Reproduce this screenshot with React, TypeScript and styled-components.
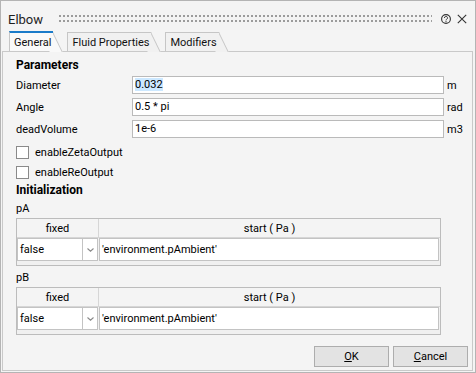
import React from 'react';
import styled, { createGlobalStyle } from 'styled-components';

const GlobalStyle = createGlobalStyle`
  html, body {
    margin: 0;
    padding: 0;
    background: #f4f4f4;
  }
  body {
    font-family: Roboto, 'Liberation Sans', sans-serif;
    font-size: 11px;
    color: #000;
  }
  * {
    box-sizing: border-box;
  }
`;

const Window = styled.div`
  width: 476px;
  height: 373px;
  border: 1px solid #b4b4b4;
  background: #f4f4f4;
  display: flex;
  flex-direction: column;
`;

const TitleBar = styled.div`
  height: 30px;
  display: flex;
  align-items: flex-start;
  padding: 0 8px 0 7px;
`;

const Title = styled.div`
  margin-top: 11px;
  font-size: 13px;
  line-height: 16px;
  color: #1e1e1e;
`;

const Grip = styled.svg`
  flex: 1;
  height: 7px;
  margin: 14px 9px 0 16px;
`;

const TitleIcon = styled.svg`
  width: 10px;
  height: 10px;
  margin-top: 13px;
  & + & {
    margin-left: 6px;
  }
`;

const TabBar = styled.div`
  position: relative;
  z-index: 0;
  height: 20px;
  display: flex;
  align-items: flex-end;
  padding-left: 8px;
`;

const Tab = styled.div<{ $active?: boolean }>`
  position: relative;
  height: ${(p) => (p.$active ? 20 : 19)}px;
  margin-right: 14px;
  padding: 0 2px 0 4px;
  display: flex;
  align-items: center;
  border-left: 1px solid #c6c6c6;
  border-top: ${(p) => (p.$active ? '2px solid #1a7bc9' : '1px solid #c6c6c6')};
  background: ${(p) => (p.$active ? '#f9f9f9' : '#f1f1f1')};
  color: #111;

  &::after {
    content: '';
    position: absolute;
    z-index: -1;
    top: ${(p) => (p.$active ? -1 : -1)}px;
    right: 0;
    width: 12px;
    height: calc(100% + 1px);
    border-top: 1px solid #c6c6c6;
    border-right: 1px solid #c6c6c6;
    background: inherit;
    transform: skewX(26deg);
    transform-origin: top left;
  }
`;

const Pane = styled.div`
  flex: 1;
  margin: 0 2px 1px 1px;
  border: 1px solid #c9c9c9;
  padding: 5px 4px 3px 13px;
  display: flex;
  flex-direction: column;
`;

const Heading = styled.div<{ $gap?: number }>`
  margin-top: ${(p) => p.$gap ?? 0}px;
  font-size: 12px;
  font-weight: 700;
  line-height: 16px;
`;

const ParamGrid = styled.div`
  margin-top: 3px;
  display: grid;
  grid-template-columns: 113px 312px auto;
  grid-auto-rows: 18px;
  column-gap: 3px;
  row-gap: 4px;
  align-items: center;
`;

const FieldBox = styled.div`
  height: 18px;
  border: 1px solid #bababa;
  background: #fff;
  padding: 0 2px;
  line-height: 16px;
  white-space: nowrap;
`;

const Selected = styled.span`
  background: #cce8ff;
`;

const CheckList = styled.div`
  margin-top: 8px;
  display: flex;
  flex-direction: column;
  gap: 7px;
`;

const CheckRow = styled.label`
  height: 13px;
  display: flex;
  align-items: center;
  gap: 6px;
`;

const CheckBox = styled.span`
  width: 13px;
  height: 13px;
  border: 1px solid #8a8a8a;
  background: #fff;
`;

const GroupLabel = styled.div<{ $gap: number }>`
  margin-top: ${(p) => p.$gap}px;
  margin-bottom: 2px;
  line-height: 14px;
`;

const Table = styled.div`
  width: 425px;
  border: 1px solid #bcbcbc;
  background: #f0f0f0;
  padding-bottom: 4px;
`;

const HeaderRow = styled.div`
  display: grid;
  grid-template-columns: 82px 1fr;
  height: 19px;
  border-bottom: 1px solid #d6d6d6;
  background: #f4f4f4;
`;

const HeaderCell = styled.div<{ $divider?: boolean }>`
  display: flex;
  align-items: center;
  justify-content: center;
  border-right: ${(p) => (p.$divider ? '1px solid #d6d6d6' : 'none')};
`;

const DataRow = styled.div`
  display: grid;
  grid-template-columns: 66px 15px 1fr;
  height: 23px;
`;

const Cell = styled.div<{ $joined?: boolean }>`
  border: 1px solid #c3c3c3;
  border-left-width: ${(p) => (p.$joined ? 0 : 1)}px;
  background: #fff;
  padding-left: 2px;
  display: flex;
  align-items: center;
`;

const ValueCell = styled(Cell)`
  margin: 0 1px 0 1px;
`;

const ArrowCell = styled(Cell)`
  justify-content: center;
  padding-left: 0;
`;

const ButtonRow = styled.div`
  margin-top: auto;
  display: flex;
  justify-content: flex-end;
  gap: 4px;
`;

const Button = styled.button`
  width: 75px;
  height: 21px;
  border: 1px solid #adadad;
  background: #e3e3e3;
  font: inherit;
  color: #000;
  padding: 0;
`;

const params = [
  { name: 'Diameter', value: '0.032', unit: 'm', selected: true },
  { name: 'Angle', value: '0.5 * pi', unit: 'rad' },
  { name: 'deadVolume', value: '1e-6', unit: 'm3' },
];

const StartTable: React.FC = () => (
  <Table>
    <HeaderRow>
      <HeaderCell $divider>fixed</HeaderCell>
      <HeaderCell>start ( Pa )</HeaderCell>
    </HeaderRow>
    <DataRow>
      <Cell>false</Cell>
      <ArrowCell $joined>
        <svg width="7" height="4" viewBox="0 0 7 4">
          <path d="M0.5 0.5 L3.5 3.2 L6.5 0.5" fill="none" stroke="#8a8a8a" strokeWidth="1.1" />
        </svg>
      </ArrowCell>
      <ValueCell>'environment.pAmbient'</ValueCell>
    </DataRow>
  </Table>
);

export default function App() {
  return (
    <>
      <GlobalStyle />
      <Window>
        <TitleBar>
          <Title>Elbow</Title>
          <Grip>
            <defs>
              <pattern id="grip" width="4" height="7" patternUnits="userSpaceOnUse">
                <rect x="0" y="0" width="2" height="2" fill="#9c9c9c" />
                <rect x="0" y="5" width="2" height="2" fill="#9c9c9c" />
              </pattern>
            </defs>
            <rect width="100%" height="7" fill="url(#grip)" />
          </Grip>
          <TitleIcon viewBox="0 0 10 10">
            <circle cx="5" cy="5" r="4.4" fill="none" stroke="#333" strokeWidth="1.1" />
            <path d="M3.5 4 A1.5 1.5 0 1 1 5.7 5.2 C5.2 5.5 5 5.8 5 6.4" fill="none" stroke="#333" strokeWidth="1" />
            <rect x="4.5" y="7.1" width="1" height="1" fill="#333" />
          </TitleIcon>
          <TitleIcon viewBox="0 0 10 10">
            <path d="M0.8 0.8 L9.2 9.2 M9.2 0.8 L0.8 9.2" stroke="#333" strokeWidth="1.1" />
          </TitleIcon>
        </TitleBar>
        <TabBar>
          <Tab $active>General</Tab>
          <Tab>Fluid Properties</Tab>
          <Tab>Modifiers</Tab>
        </TabBar>
        <Pane>
          <Heading>Parameters</Heading>
          <ParamGrid>
            {params.map((p) => (
              <React.Fragment key={p.name}>
                <span>{p.name}</span>
                <FieldBox>{p.selected ? <Selected>{p.value}</Selected> : p.value}</FieldBox>
                <span>{p.unit}</span>
              </React.Fragment>
            ))}
          </ParamGrid>
          <CheckList>
            <CheckRow>
              <CheckBox />
              enableZetaOutput
            </CheckRow>
            <CheckRow>
              <CheckBox />
              enableReOutput
            </CheckRow>
          </CheckList>
          <Heading $gap={3}>Initialization</Heading>
          <GroupLabel $gap={4}>pA</GroupLabel>
          <StartTable />
          <GroupLabel $gap={5}>pB</GroupLabel>
          <StartTable />
          <ButtonRow>
            <Button>
              <u>O</u>K
            </Button>
            <Button>
              <u>C</u>ancel
            </Button>
          </ButtonRow>
        </Pane>
      </Window>
    </>
  );
}
